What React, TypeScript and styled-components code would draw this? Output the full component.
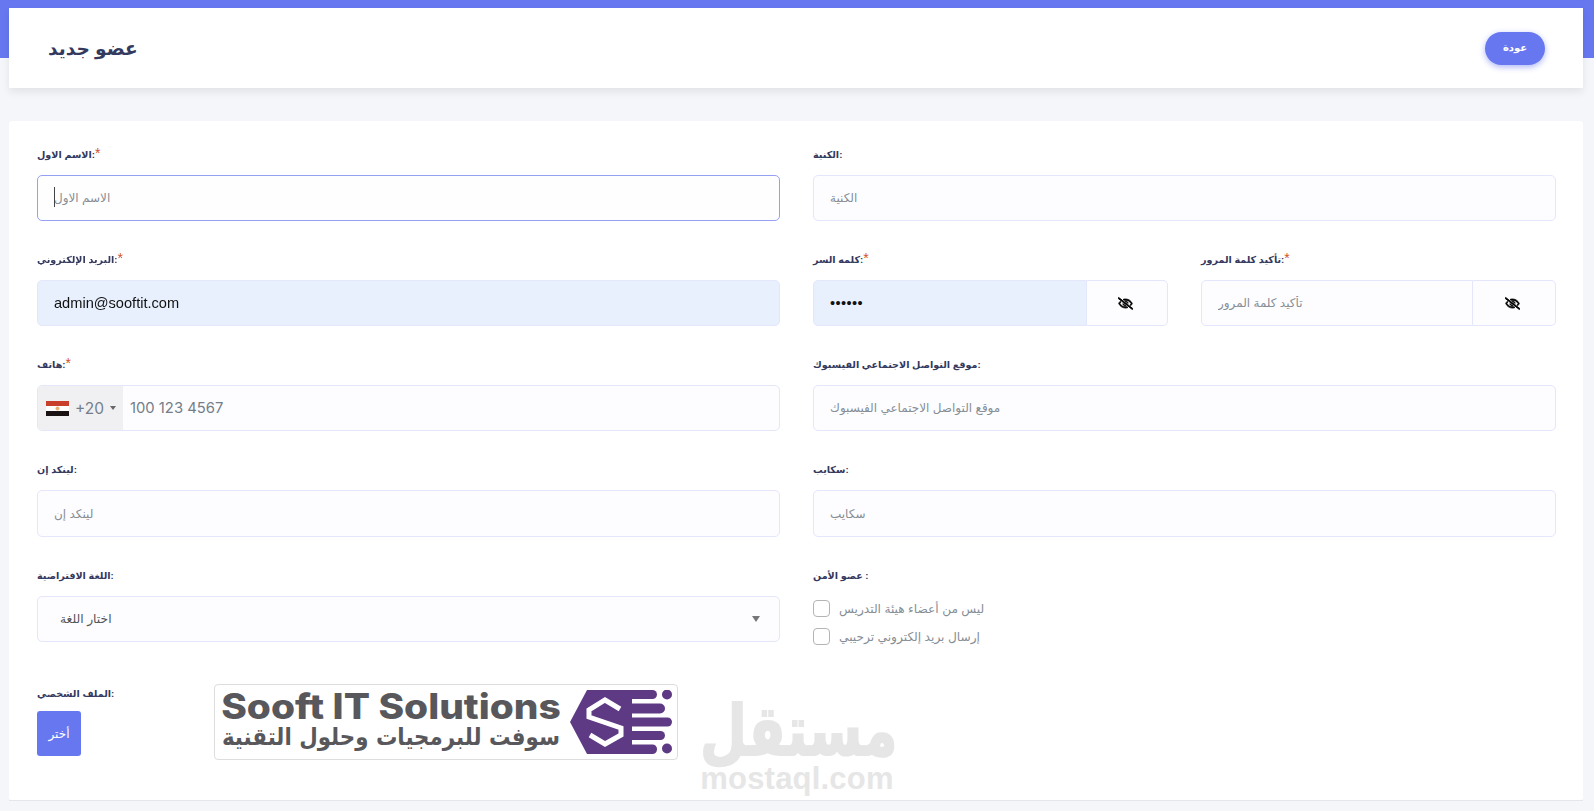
import React from 'react';
import styled, { createGlobalStyle } from 'styled-components';
import { FaRegEyeSlash } from 'react-icons/fa';

const GlobalStyle = createGlobalStyle`
  html, body {
    margin: 0;
    padding: 0;
    background: #f4f6f9;
    font-family: "Liberation Sans", "DejaVu Sans", sans-serif;
    color: #34395e;
  }
  * {
    box-sizing: border-box;
  }
`;

const Page = styled.div`
  position: relative;
  min-height: 811px;
  padding: 8px 11px 0 9px;
  background: linear-gradient(#6777ef 58px, transparent 58px);
`;

const HeaderCard = styled.header`
  height: 80px;
  padding: 0 38px 0 39px;
  display: flex;
  align-items: center;
  justify-content: space-between;
  background: #fff;
  box-shadow: 0 4px 8px rgba(0, 0, 0, 0.08);
`;

const Title = styled.h1`
  margin: 2px 0 0;
  font-size: 18.6px;
  line-height: 24px;
  font-weight: 700;
  color: #34395e;
`;

const BackButton = styled.button`
  width: 60px;
  height: 33px;
  margin-top: 1px;
  padding: 0 0 3px;
  border: 0;
  border-radius: 17px;
  background: #6777ef;
  color: #fff;
  font: 700 10px "Liberation Sans", "DejaVu Sans", sans-serif;
  box-shadow: 0 2px 6px #acb5f6;
`;

const FormCard = styled.form`
  margin-top: 33px;
  padding: 24px 27px 40px 28px;
  background: #fff;
  border-radius: 3px;
`;

const Grid = styled.div`
  display: grid;
  grid-template-columns: 743px 743px;
  column-gap: 33px;
  row-gap: 29px;
`;

const Split = styled.div`
  display: grid;
  grid-template-columns: 355px 355px;
  column-gap: 33px;
`;

const Field = styled.div`
  position: relative;
  min-width: 0;
`;

const Label = styled.label`
  display: block;
  height: 16px;
  margin-bottom: 14px;
  font-size: 9.6px;
  line-height: 19px;
  font-weight: 700;
  color: #34395e;
`;

const Star = styled.span`
  color: #d1502c;
  font-size: 14px;
  line-height: 0;
  font-weight: 400;
`;

const Input = styled.input<{ $tall?: boolean }>`
  display: block;
  width: 100%;
  height: ${(p) => (p.$tall ? '47px' : '46px')};
  padding: 0 16px 2px;
  border: 1px solid #e4e6fc;
  border-radius: 5px;
  background: #fdfdff;
  outline: none;
  font: 14.6px "Liberation Sans", "DejaVu Sans", sans-serif;
  color: #111;
  caret-color: transparent;

  &::placeholder {
    color: #868e96;
    font-size: 12px;
  }
  &:focus {
    border-color: #95a0f4;
    background: #fefeff;
  }
`;

const FakeCaret = styled.span`
  position: absolute;
  left: 17px;
  top: 42px;
  width: 1px;
  height: 20px;
  background: #444;
`;

const FilledInput = styled(Input)`
  padding-bottom: 0;
  background: #e8f0fe;
`;

const InputGroup = styled.div`
  display: flex;
  height: 46px;
`;

const GroupInput = styled(Input)<{ $filled?: boolean }>`
  flex: 1;
  min-width: 0;
  padding-bottom: ${(p) => (p.$filled ? '0' : '2px')};
  border-radius: 5px 0 0 5px;
  background: ${(p) => (p.$filled ? '#e8f0fe' : '#fdfdff')};
  letter-spacing: ${(p) => (p.$filled ? '0.4px' : '0')};
`;

const EyeToggle = styled.button<{ $width: number }>`
  width: ${(p) => p.$width}px;
  flex: none;
  display: flex;
  align-items: center;
  justify-content: center;
  padding: 0 3px 0 0;
  border: 1px solid #e4e6fc;
  border-left: 0;
  border-radius: 0 5px 5px 0;
  background: #fdfdff;
  color: #000;
  font-size: 15px;

  svg {
    stroke: currentColor;
    stroke-width: 36px;
  }
`;

const PhoneBox = styled.div`
  display: flex;
  height: 46px;
  border: 1px solid #e4e6fc;
  border-radius: 5px;
  background: #fdfdff;
  overflow: hidden;
`;

const CountryPicker = styled.div`
  width: 85px;
  flex: none;
  display: flex;
  align-items: center;
  padding-left: 8px;
  background: #f0f0f2;
  font: 15.5px "Inter", sans-serif;
  color: #757e88;
`;

const DialCode = styled.span`
  margin-left: 6px;
`;

const CaretDown = styled.span`
  margin-left: 6px;
  border-left: 3px solid transparent;
  border-right: 3px solid transparent;
  border-top: 4px solid #666;
`;

const PhoneInput = styled.input`
  flex: 1;
  min-width: 0;
  padding: 0 7px;
  border: 0;
  outline: none;
  background: transparent;
  font: 14.8px "Inter", sans-serif;

  &::placeholder {
    color: #757e88;
  }
`;

const SelectBox = styled.div`
  height: 46px;
  padding: 0 19px 0 22px;
  display: flex;
  align-items: center;
  justify-content: space-between;
  border: 1px solid #e4e6fc;
  border-radius: 5px;
  background: #fdfdff;
  font-size: 12.3px;
  color: #555;
`;

const SelectArrow = styled.span`
  border-left: 4px solid transparent;
  border-right: 4px solid transparent;
  border-top: 6px solid #777;
`;

const CheckList = styled.div`
  display: flex;
  flex-direction: column;
  gap: 11px;
  padding: 4px 0 10px;
`;

const CheckRow = styled.label`
  display: flex;
  align-items: center;
  gap: 9px;
  height: 17px;
  font-size: 12.2px;
  color: #868e96;
`;

const CheckBox = styled.span`
  width: 17px;
  height: 17px;
  flex: none;
  border: 1px solid #b4b4b4;
  border-radius: 4px;
  background: #fff;
`;

const ProfileRow = styled.div`
  display: flex;
  margin-top: 29px;
`;

const ProfileCol = styled.div`
  width: 177px;
  flex: none;
`;

const ProfileLabel = styled(Label)`
  margin-bottom: 11px;
`;

const ChooseButton = styled.button`
  width: 44px;
  height: 45px;
  padding: 0;
  border: 0;
  border-radius: 3px;
  background: #6777ef;
  color: #fff;
  font: 12px "Liberation Sans", "DejaVu Sans", sans-serif;
`;

const LogoFrame = styled.div`
  width: 464px;
  height: 76px;
  padding: 5px 5px 0 4px;
  display: flex;
  justify-content: space-between;
  border: 1px solid #ddd;
  border-radius: 4px;
  color: #58585c;
`;

const LogoText = styled.div`
  display: flex;
  flex-direction: column;
  align-items: center;
  width: 344px;
`;

const LogoEnglish = styled.div`
  font: 800 35px/32px "Inter", sans-serif;
  transform: scaleX(1.11);
  white-space: nowrap;
`;

const LogoArabic = styled.div`
  font: 700 24px/30px "DejaVu Sans", sans-serif;
  transform: scaleX(0.89);
  white-space: nowrap;
`;

const Watermark = styled.div`
  position: absolute;
  left: 700px;
  top: 701px;
  width: 194px;
  text-align: center;
  color: #e6e6e6;
  pointer-events: none;
`;

const WatermarkArabic = styled.div`
  font: 700 54px/62px "DejaVu Sans", sans-serif;
  -webkit-text-stroke: 1.5px #e6e6e6;
  transform: scaleY(1.3);
`;

const WatermarkLatin = styled.div`
  font: 700 31px/32px "Liberation Sans", sans-serif;
  letter-spacing: 0.2px;
`;

const FooterLine = styled.div`
  border-top: 1px solid #e3e6ec;
  height: 11px;
`;

const EgyptFlag = () => (
  <svg width="23" height="15" viewBox="0 0 23 15">
    <rect width="23" height="5" fill="#c8402c" />
    <rect y="5" width="23" height="5" fill="#fff" />
    <rect y="10" width="23" height="5" fill="#1b1214" />
    <circle cx="11.5" cy="7.5" r="2" fill="#e8b27a" />
  </svg>
);

const SooftMark = () => (
  <svg width="102" height="64" viewBox="0 0 102 64">
    <g fill="#5f3a84">
      <polygon points="0,32 17,0 62,0 62,64 17,64" />
      <rect x="50" y="0" width="37" height="9" rx="4.5" />
      <rect x="50" y="13.5" width="45" height="10" rx="5" />
      <rect x="50" y="27.5" width="52" height="9" rx="4.5" />
      <rect x="50" y="41" width="45" height="9" rx="4.5" />
      <rect x="50" y="54.5" width="37" height="9.5" rx="4.5" />
      <circle cx="97" cy="4.5" r="5" />
      <circle cx="97" cy="58.5" r="5" />
    </g>
    <path
      d="M50 19 L35 10 L19 20 L19 27 L51 38 L51 45 L35 54 L20 45"
      fill="none"
      stroke="#fff"
      strokeWidth="5"
    />
  </svg>
);

export default function App() {
  return (
    <Page>
      <GlobalStyle />
      <HeaderCard>
        <Title>عضو جديد</Title>
        <BackButton type="button">عودة</BackButton>
      </HeaderCard>

      <FormCard>
        <Grid>
          <Field>
            <Label>الاسم الاول:<Star>*</Star></Label>
            <Input placeholder="الاسم الاول" autoFocus />
            <FakeCaret />
          </Field>
          <Field>
            <Label>الكنية:</Label>
            <Input placeholder="الكنية" />
          </Field>

          <Field>
            <Label>البريد الإلكتروني:<Star>*</Star></Label>
            <FilledInput defaultValue="admin@sooftit.com" />
          </Field>
          <Split>
            <Field>
              <Label>كلمه السر:<Star>*</Star></Label>
              <InputGroup>
                <GroupInput $filled type="password" defaultValue="123456" />
                <EyeToggle type="button" $width={81}><FaRegEyeSlash /></EyeToggle>
              </InputGroup>
            </Field>
            <Field>
              <Label>تأكيد كلمة المرور:<Star>*</Star></Label>
              <InputGroup>
                <GroupInput type="password" placeholder="تأكيد كلمة المرور" />
                <EyeToggle type="button" $width={83}><FaRegEyeSlash /></EyeToggle>
              </InputGroup>
            </Field>
          </Split>

          <Field>
            <Label>هاتف:<Star>*</Star></Label>
            <PhoneBox>
              <CountryPicker>
                <EgyptFlag />
                <DialCode>+20</DialCode>
                <CaretDown />
              </CountryPicker>
              <PhoneInput placeholder="100 123 4567" />
            </PhoneBox>
          </Field>
          <Field>
            <Label>موقع التواصل الاجتماعي الفيسبوك:</Label>
            <Input placeholder="موقع التواصل الاجتماعي الفيسبوك" />
          </Field>

          <Field>
            <Label>لينكد إن:</Label>
            <Input $tall placeholder="لينكد إن" />
          </Field>
          <Field>
            <Label>سكايب:</Label>
            <Input $tall placeholder="سكايب" />
          </Field>

          <Field>
            <Label>اللغة الافتراضية:</Label>
            <SelectBox>
              <span>اختار اللغة</span>
              <SelectArrow />
            </SelectBox>
          </Field>
          <Field>
            <Label>عضو الأمن :</Label>
            <CheckList>
              <CheckRow><CheckBox /><span>ليس من أعضاء هيئة التدريس</span></CheckRow>
              <CheckRow><CheckBox /><span>إرسال بريد إلكتروني ترحيبي</span></CheckRow>
            </CheckList>
          </Field>
        </Grid>

        <ProfileRow>
          <ProfileCol>
            <ProfileLabel>الملف الشخصي:</ProfileLabel>
            <ChooseButton type="button">أختر</ChooseButton>
          </ProfileCol>
          <LogoFrame>
            <LogoText>
              <LogoEnglish>Sooft IT Solutions</LogoEnglish>
              <LogoArabic>سوفت للبرمجيات وحلول التقنية</LogoArabic>
            </LogoText>
            <SooftMark />
          </LogoFrame>
        </ProfileRow>
      </FormCard>
      <FooterLine />

      <Watermark>
        <WatermarkArabic>مستقل</WatermarkArabic>
        <WatermarkLatin>mostaql.com</WatermarkLatin>
      </Watermark>
    </Page>
  );
}
